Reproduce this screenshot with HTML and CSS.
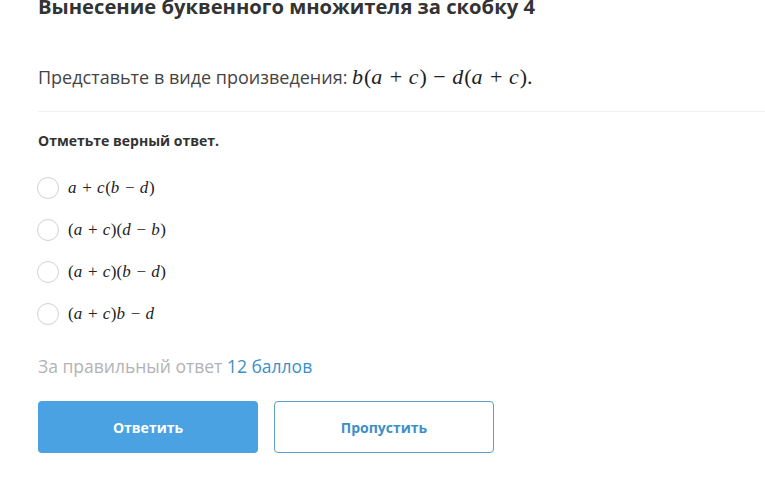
FILE: index.html
```html
<!DOCTYPE html>
<html>
<head>
    <title>Вынесение буквенного множителя за скобку 4</title>
    <link rel="stylesheet" href="styles.css">
</head>
<body>
    <div class="task">
        <h1 class="task-title">Вынесение буквенного множителя за скобку 4</h1>

        <p class="task-question">Представьте в виде произведения: <span class="math"><i>b</i>(<i>a</i><span class="op">+</span><i>c</i>)<span class="op">−</span><i>d</i>(<i>a</i><span class="op">+</span><i>c</i>).</span></p>

        <div class="task-divider"></div>

        <p class="task-hint">Отметьте верный ответ.</p>

        <form class="answers">
            <label class="answer">
                <input type="radio" name="answer">
                <span class="radio"></span>
                <span class="math"><i>a</i><span class="op">+</span><i>c</i>(<i>b</i><span class="op">−</span><i>d</i>)</span>
            </label>
            <label class="answer">
                <input type="radio" name="answer">
                <span class="radio"></span>
                <span class="math">(<i>a</i><span class="op">+</span><i>c</i>)(<i>d</i><span class="op">−</span><i>b</i>)</span>
            </label>
            <label class="answer">
                <input type="radio" name="answer">
                <span class="radio"></span>
                <span class="math">(<i>a</i><span class="op">+</span><i>c</i>)(<i>b</i><span class="op">−</span><i>d</i>)</span>
            </label>
            <label class="answer">
                <input type="radio" name="answer">
                <span class="radio"></span>
                <span class="math">(<i>a</i><span class="op">+</span><i>c</i>)<i>b</i><span class="op">−</span><i>d</i></span>
            </label>
        </form>

        <p class="task-score">За правильный ответ <span class="score">12 баллов</span></p>

        <div class="buttons">
            <button type="button" class="btn btn-primary">Ответить</button>
            <button type="button" class="btn btn-outline">Пропустить</button>
        </div>
    </div>
</body>
</html>
```

FILE: styles.css
```css
body {
    margin: 0;
    background: #fff;
    font-family: "Open Sans", "Noto Sans", sans-serif;
    color: #333;
    overflow: hidden;
}

.task {
    padding-left: 38px;
    margin-top: -6px;
}

.task-title {
    margin: 0;
    font-size: 20.2px;
    line-height: 24px;
    font-weight: 700;
    color: #333;
}

.task-question {
    margin: 0;
    margin-top: 47px;
    font-size: 18px;
    line-height: 24px;
    color: #444;
}

.math {
    font-family: "Liberation Serif", "DejaVu Serif", serif;
    font-size: 22px;
    color: #222;
}

.math i {
    font-style: italic;
    padding-right: 0.04em;
}

.math .op {
    margin: 0 0.3em;
}

.task-divider {
    margin-top: 22px;
    height: 1px;
    background: #f0f0f0;
}

.task-hint {
    margin: 0;
    margin-top: 19px;
    font-size: 14px;
    line-height: 20px;
    font-weight: 700;
    color: #333;
}

.answers {
    margin-top: 26px;
    display: flex;
    flex-direction: column;
    gap: 20px;
}

.answer {
    display: flex;
    align-items: center;
    gap: 9px;
    height: 22px;
    cursor: pointer;
}

.answer input {
    display: none;
}

.radio {
    width: 20px;
    height: 20px;
    border: 1px solid #d2d2d2;
    border-radius: 50%;
    margin-left: -1px;
}

.answer .math {
    font-size: 17px;
}

.task-score {
    margin: 0;
    margin-top: 29px;
    font-size: 17.5px;
    line-height: 24px;
    color: #b3b3b3;
}

.score {
    color: #3d8fc6;
}

.buttons {
    margin-top: 23px;
    display: flex;
    gap: 16px;
}

.btn {
    width: 220px;
    height: 52px;
    border-radius: 4px;
    font-family: "Open Sans", "Noto Sans", sans-serif;
    font-size: 14px;
    font-weight: 700;
    cursor: pointer;
}

.btn-primary {
    background: #4ba2e3;
    border: none;
    color: #fff;
}

.btn-outline {
    background: #fff;
    border: 1px solid #5e9fc4;
    color: #3d8fc6;
}
```
